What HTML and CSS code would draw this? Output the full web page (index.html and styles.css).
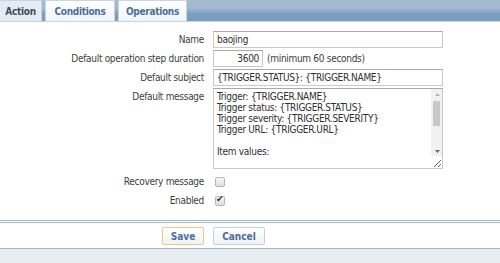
FILE: index.html
```html
<!DOCTYPE html>
<html lang="en">
<head>
  <meta charset="UTF-8">
  <title>Action</title>
  <link rel="stylesheet" href="styles.css">
</head>
<body>
  <div class="tabs">
    <span class="tab active">Action</span>
    <span class="tab">Conditions</span>
    <span class="tab">Operations</span>
  </div>

  <form class="form">
    <label class="label">Name</label>
    <div class="field"><input class="input wide" type="text" value="baojing"></div>

    <label class="label">Default operation step duration</label>
    <div class="field">
      <input class="input short" type="text" value="3600">
      <span class="hint">(minimum 60 seconds)</span>
    </div>

    <label class="label">Default subject</label>
    <div class="field"><input class="input wide" type="text" value="{TRIGGER.STATUS}: {TRIGGER.NAME}"></div>

    <label class="label">Default message</label>
    <div class="field">
      <div class="message-box">
        <textarea class="input wide message">Trigger: {TRIGGER.NAME}
Trigger status: {TRIGGER.STATUS}
Trigger severity: {TRIGGER.SEVERITY}
Trigger URL: {TRIGGER.URL}

Item values:

1. {ITEM.NAME1} ({HOST.NAME1}:{ITEM.KEY1}): {ITEM.VALUE1}
2. {ITEM.NAME2} ({HOST.NAME2}:{ITEM.KEY2}): {ITEM.VALUE2}
3. {ITEM.NAME3} ({HOST.NAME3}:{ITEM.KEY3}): {ITEM.VALUE3}

Original event ID: {EVENT.ID}</textarea>
        <div class="scrollbar">
          <svg class="arrow" width="10" height="10" viewBox="0 0 10 10"><path d="M3 6h5L5.5 3z" fill="#b4b4b4"/></svg>
          <div class="thumb"></div>
          <svg class="arrow arrow-down" width="10" height="10" viewBox="0 0 10 10"><path d="M3 4h5L5.5 7z" fill="#6a6a6a"/></svg>
        </div>
      </div>
    </div>

    <label class="label check-label first-check">Recovery message</label>
    <div class="field check-field first-check"><input class="check" type="checkbox"></div>

    <label class="label check-label">Enabled</label>
    <div class="field check-field"><input class="check" type="checkbox" checked></div>
  </form>

  <div class="footer">
    <button class="btn btn-save" type="button">Save</button>
    <button class="btn btn-cancel" type="button">Cancel</button>
  </div>
  <div class="bottom"></div>
</body>
</html>
```

FILE: styles.css
```css
* {
  margin: 0;
  padding: 0;
  box-sizing: border-box;
}

body {
  font-family: "DejaVu Sans Condensed", "Liberation Sans", sans-serif;
  font-size: 10px;
  letter-spacing: -0.3px;
  color: #3b3b3b;
  background: #ffffff;
  width: 500px;
  height: 263px;
  overflow: hidden;
}

/* tab strip */
.tabs {
  display: flex;
  align-items: flex-end;
  gap: 3px;
  height: 22px;
  background: linear-gradient(#a6bbd2 0%, #a3b8cf 40%, #7b9fc2 65%, #779cc0 100%);
  border-bottom: 1px solid #c5d3e2;
}

.tab {
  display: flex;
  align-items: center;
  justify-content: center;
  height: 21px;
  font-weight: bold;
  color: #4d6e9b;
  background: linear-gradient(#ffffff, #f0f4f9);
  border: 1px solid #c8d5e4;
  border-bottom: none;
}

.tab:first-child {
  border-left: none;
}

.tab.active {
  width: 42px;
  color: #3c4b5d;
  background: #e6ebf2;
}

.tab:nth-child(2) {
  width: 70px;
}

.tab:nth-child(3) {
  width: 69px;
}

/* form grid */
.form {
  display: grid;
  grid-template-columns: 204px 1fr;
  column-gap: 9px;
  row-gap: 2px;
  padding-top: 9px;
}

.label {
  text-align: right;
  line-height: 17px;
  color: #3d3d3d;
}

.field {
  display: flex;
  align-items: center;
  gap: 4px;
}

.input {
  font-family: inherit;
  font-size: 10px;
  letter-spacing: -0.3px;
  color: #2f2f2f;
  height: 17px;
  padding: 0 3px;
  border: 1px solid #c9c9c9;
  border-top-color: #a9a9a9;
  background: #ffffff;
  outline: none;
}

.wide {
  width: 230px;
}

.short {
  width: 50px;
  text-align: right;
}

.hint {
  color: #3d3d3d;
}

/* textarea with its drawn scrollbar */
.message-box {
  position: relative;
  display: flex;
}

.message {
  height: 81px;
  padding: 2px 14px 2px 3px;
  line-height: 11px;
  resize: both;
  overflow: hidden;
  white-space: pre;
}

.scrollbar {
  position: absolute;
  top: 1px;
  right: 1px;
  bottom: 13px;
  width: 11px;
  display: flex;
  flex-direction: column;
  align-items: center;
  background: #f1f1f1;
}

.arrow {
  flex: none;
  margin-top: 1px;
}

.arrow-down {
  margin-top: auto;
}

.thumb {
  width: 7px;
  height: 25px;
  margin-top: 1px;
  background: #c8c8c8;
}

.check-label {
  line-height: 17px;
}

.first-check {
  margin-top: 2px;
}

.check {
  appearance: none;
  width: 10px;
  height: 10px;
  margin-left: 2px;
  border: 1px solid #b5b5b5;
  border-radius: 2px;
  background: linear-gradient(#f6f6f6, #dedede);
  position: relative;
}

.check:checked::after {
  content: "\2714";
  position: absolute;
  left: 0;
  top: -3px;
  font-size: 9px;
  color: #333333;
}

/* footer */
.footer {
  display: flex;
  gap: 9px;
  margin-top: 11px;
  padding: 4px 0 3px 162px;
  border-top: 3px double #a5b7cc;
  border-bottom: 1px solid #a5b7cc;
}

.btn {
  font-family: inherit;
  font-size: 10px;
  font-weight: bold;
  color: #4d6e9b;
  height: 18px;
  background: linear-gradient(#ffffff, #eef2f7);
  border: 1px solid #c3cfdd;
  border-radius: 2px;
  cursor: pointer;
}

.btn-save {
  width: 42px;
  border-color: #f5c27f;
}

.btn-cancel {
  width: 52px;
}

.bottom {
  height: 20px;
  background: #e8edf1;
}
```
